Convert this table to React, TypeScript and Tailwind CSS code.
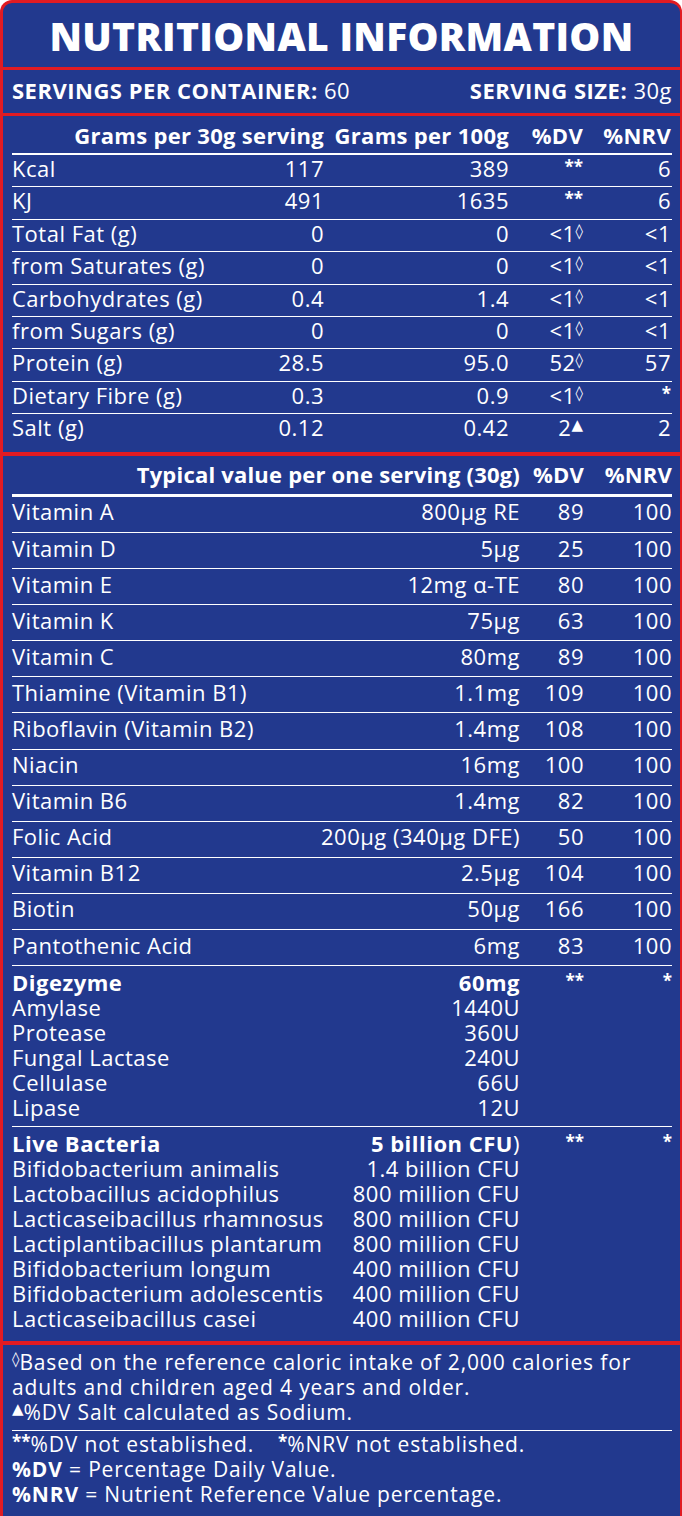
import React from 'react';

type MacroRow = {
  label: string;
  serving: string;
  per100: string;
  dv: string;
  dvMark?: string;
  nrv: string;
};

type VitRow = {
  label: string;
  amount: string;
  dv: string;
  nrv: string;
};

const macros: MacroRow[] = [
  { label: 'Kcal', serving: '117', per100: '389', dv: '**', nrv: '6' },
  { label: 'KJ', serving: '491', per100: '1635', dv: '**', nrv: '6' },
  { label: 'Total Fat (g)', serving: '0', per100: '0', dv: '<1', dvMark: '◊', nrv: '<1' },
  { label: 'from Saturates (g)', serving: '0', per100: '0', dv: '<1', dvMark: '◊', nrv: '<1' },
  { label: 'Carbohydrates (g)', serving: '0.4', per100: '1.4', dv: '<1', dvMark: '◊', nrv: '<1' },
  { label: 'from Sugars (g)', serving: '0', per100: '0', dv: '<1', dvMark: '◊', nrv: '<1' },
  { label: 'Protein (g)', serving: '28.5', per100: '95.0', dv: '52', dvMark: '◊', nrv: '57' },
  { label: 'Dietary Fibre (g)', serving: '0.3', per100: '0.9', dv: '<1', dvMark: '◊', nrv: '*' },
  { label: 'Salt (g)', serving: '0.12', per100: '0.42', dv: '2', dvMark: '▲', nrv: '2' },
];

const vitamins: VitRow[] = [
  { label: 'Vitamin A', amount: '800µg RE', dv: '89', nrv: '100' },
  { label: 'Vitamin D', amount: '5µg', dv: '25', nrv: '100' },
  { label: 'Vitamin E', amount: '12mg α-TE', dv: '80', nrv: '100' },
  { label: 'Vitamin K', amount: '75µg', dv: '63', nrv: '100' },
  { label: 'Vitamin C', amount: '80mg', dv: '89', nrv: '100' },
  { label: 'Thiamine (Vitamin B1)', amount: '1.1mg', dv: '109', nrv: '100' },
  { label: 'Riboflavin (Vitamin B2)', amount: '1.4mg', dv: '108', nrv: '100' },
  { label: 'Niacin', amount: '16mg', dv: '100', nrv: '100' },
  { label: 'Vitamin B6', amount: '1.4mg', dv: '82', nrv: '100' },
  { label: 'Folic Acid', amount: '200µg (340µg DFE)', dv: '50', nrv: '100' },
  { label: 'Vitamin B12', amount: '2.5µg', dv: '104', nrv: '100' },
  { label: 'Biotin', amount: '50µg', dv: '166', nrv: '100' },
  { label: 'Pantothenic Acid', amount: '6mg', dv: '83', nrv: '100' },
];

const enzymes = [
  ['Amylase', '1440U'],
  ['Protease', '360U'],
  ['Fungal Lactase', '240U'],
  ['Cellulase', '66U'],
  ['Lipase', '12U'],
];

const bacteria = [
  ['Bifidobacterium animalis', '1.4 billion CFU'],
  ['Lactobacillus acidophilus', '800 million CFU'],
  ['Lacticaseibacillus rhamnosus', '800 million CFU'],
  ['Lactiplantibacillus plantarum', '800 million CFU'],
  ['Bifidobacterium longum', '400 million CFU'],
  ['Bifidobacterium adolescentis', '400 million CFU'],
  ['Lacticaseibacillus casei', '400 million CFU'],
];

function Mark({ children }: { children: React.ReactNode }) {
  return (
    <span className="relative -top-[6px] text-[15px] font-normal leading-none tracking-normal font-['DejaVu_Sans',sans-serif]">
      {children}
    </span>
  );
}

function Stars({ children }: { children: React.ReactNode }) {
  return <span className="relative -top-[4px] text-[17px] font-bold leading-none tracking-normal">{children}</span>;
}

export default function App() {
  return (
    <div className="w-[682px] h-[1516px] overflow-hidden bg-white font-['Open_Sans','DejaVu_Sans',sans-serif] text-white">
      <div className="w-[682px] min-h-[1516px] bg-[#22398e] border-t-[3px] border-l-[3px] border-r-[2px] border-[#e11b22] rounded-t-[12px]">
        {/* Title */}
        <div className="h-[67px] flex items-center justify-center border-b-[3px] border-[#e11b22]">
          <h1 className="text-[39px] font-extrabold leading-none tracking-[0.3px]">NUTRITIONAL INFORMATION</h1>
        </div>

        {/* Servings */}
        <div className="h-[46px] flex items-center justify-between pl-[9px] pr-[8px] pb-[3px] border-b-[3px] border-[#e11b22] text-[22px] tracking-[0.5px] leading-none">
          <p>
            <span className="font-bold">SERVINGS PER CONTAINER:</span> 60
          </p>
          <p>
            <span className="font-bold">SERVING SIZE:</span> 30g
          </p>
        </div>

        {/* Macros */}
        <div className="pl-[9px] pr-[8px] pt-[6px] pb-[5.4px] border-b-[4px] border-[#e11b22] text-[22px] tracking-[0.5px]">
          <div className="grid grid-cols-[312px_185px_74px_88px] leading-[26px] font-bold tracking-[0.3px] pb-[5px] border-b-[2px] border-white">
            <div className="text-right">Grams per 30g serving</div>
            <div className="text-right">Grams per 100g</div>
            <div className="text-right">%DV</div>
            <div className="text-right">%NRV</div>
          </div>
          {macros.map((row, i) => (
            <div
              key={row.label}
              className={`grid grid-cols-[312px_185px_74px_88px] items-center h-[32.4px] pb-[6px] leading-[26px] ${
                i < macros.length - 1 ? 'border-b border-white' : ''
              }`}
            >
              <div className="flex justify-between">
                <span>{row.label}</span>
                <span>{row.serving}</span>
              </div>
              <div className="text-right">{row.per100}</div>
              <div className="text-right">
                {row.dv === '**' ? (
                  <Stars>**</Stars>
                ) : (
                  <>
                    {row.dv}
                    {row.dvMark && <Mark>{row.dvMark}</Mark>}
                  </>
                )}
              </div>
              <div className="text-right">{row.nrv === '*' ? <Stars>*</Stars> : row.nrv}</div>
            </div>
          ))}
        </div>

        {/* Vitamins */}
        <div className="pl-[9px] pr-[8px] pt-[5px] pb-[10px] border-b-[4px] border-[#e11b22] text-[22px] tracking-[0.5px]">
          <div className="grid grid-cols-[1fr_64px_88px] leading-[26px] font-bold tracking-[0.2px] pb-[7px] border-b-[3px] border-white">
            <div className="text-right">Typical value per one serving (30g)</div>
            <div className="text-right">%DV</div>
            <div className="text-right">%NRV</div>
          </div>
          {vitamins.map((row) => (
            <div
              key={row.label}
              className="grid grid-cols-[1fr_64px_88px] items-center h-[36.1px] pb-[6px] leading-[26px] border-b border-white"
            >
              <div className="flex justify-between">
                <span>{row.label}</span>
                <span>{row.amount}</span>
              </div>
              <div className="text-right">{row.dv}</div>
              <div className="text-right">{row.nrv}</div>
            </div>
          ))}

          {/* Digezyme */}
          <div className="grid grid-cols-[1fr_64px_88px] leading-[25px] pt-[3.5px] pb-[6px] border-b border-white">
            <div>
              <div className="flex justify-between font-bold">
                <span>Digezyme</span>
                <span>60mg</span>
              </div>
              {enzymes.map(([name, val]) => (
                <div key={name} className="flex justify-between">
                  <span>{name}</span>
                  <span>{val}</span>
                </div>
              ))}
            </div>
            <div className="text-right">
              <Stars>**</Stars>
            </div>
            <div className="text-right">
              <Stars>*</Stars>
            </div>
          </div>

          {/* Live bacteria */}
          <div className="grid grid-cols-[1fr_64px_88px] leading-[25px] pt-[4px]">
            <div>
              <div className="flex justify-between font-bold">
                <span>Live Bacteria</span>
                <span>
                  5 billion CFU<span className="font-normal">)</span>
                </span>
              </div>
              {bacteria.map(([name, val]) => (
                <div key={name} className="flex justify-between">
                  <span>{name}</span>
                  <span>{val}</span>
                </div>
              ))}
            </div>
            <div className="text-right">
              <Stars>**</Stars>
            </div>
            <div className="text-right">
              <Stars>*</Stars>
            </div>
          </div>
        </div>

        {/* Footnotes */}
        <div className="pl-[9px] pr-[8px] pt-[5.5px] text-[21px] tracking-[0.85px] leading-[25px]">
          <div className="pb-[4.5px] border-b border-white">
            <p>
              <Mark>◊</Mark>Based on the reference caloric intake of 2,000 calories for
            </p>
            <p>adults and children aged 4 years and older.</p>
            <p>
              <Mark>▲</Mark>%DV Salt calculated as Sodium.
            </p>
          </div>
          <div className="pt-[1.5px]">
            <p>
              <Stars>**</Stars>%DV not established.
              <span className="ml-[24px]">
                <Stars>*</Stars>%NRV not established.
              </span>
            </p>
            <p>
              <span className="font-bold">%DV</span> = Percentage Daily Value.
            </p>
            <p>
              <span className="font-bold">%NRV</span> = Nutrient Reference Value percentage.
            </p>
          </div>
        </div>
      </div>
    </div>
  );
}
